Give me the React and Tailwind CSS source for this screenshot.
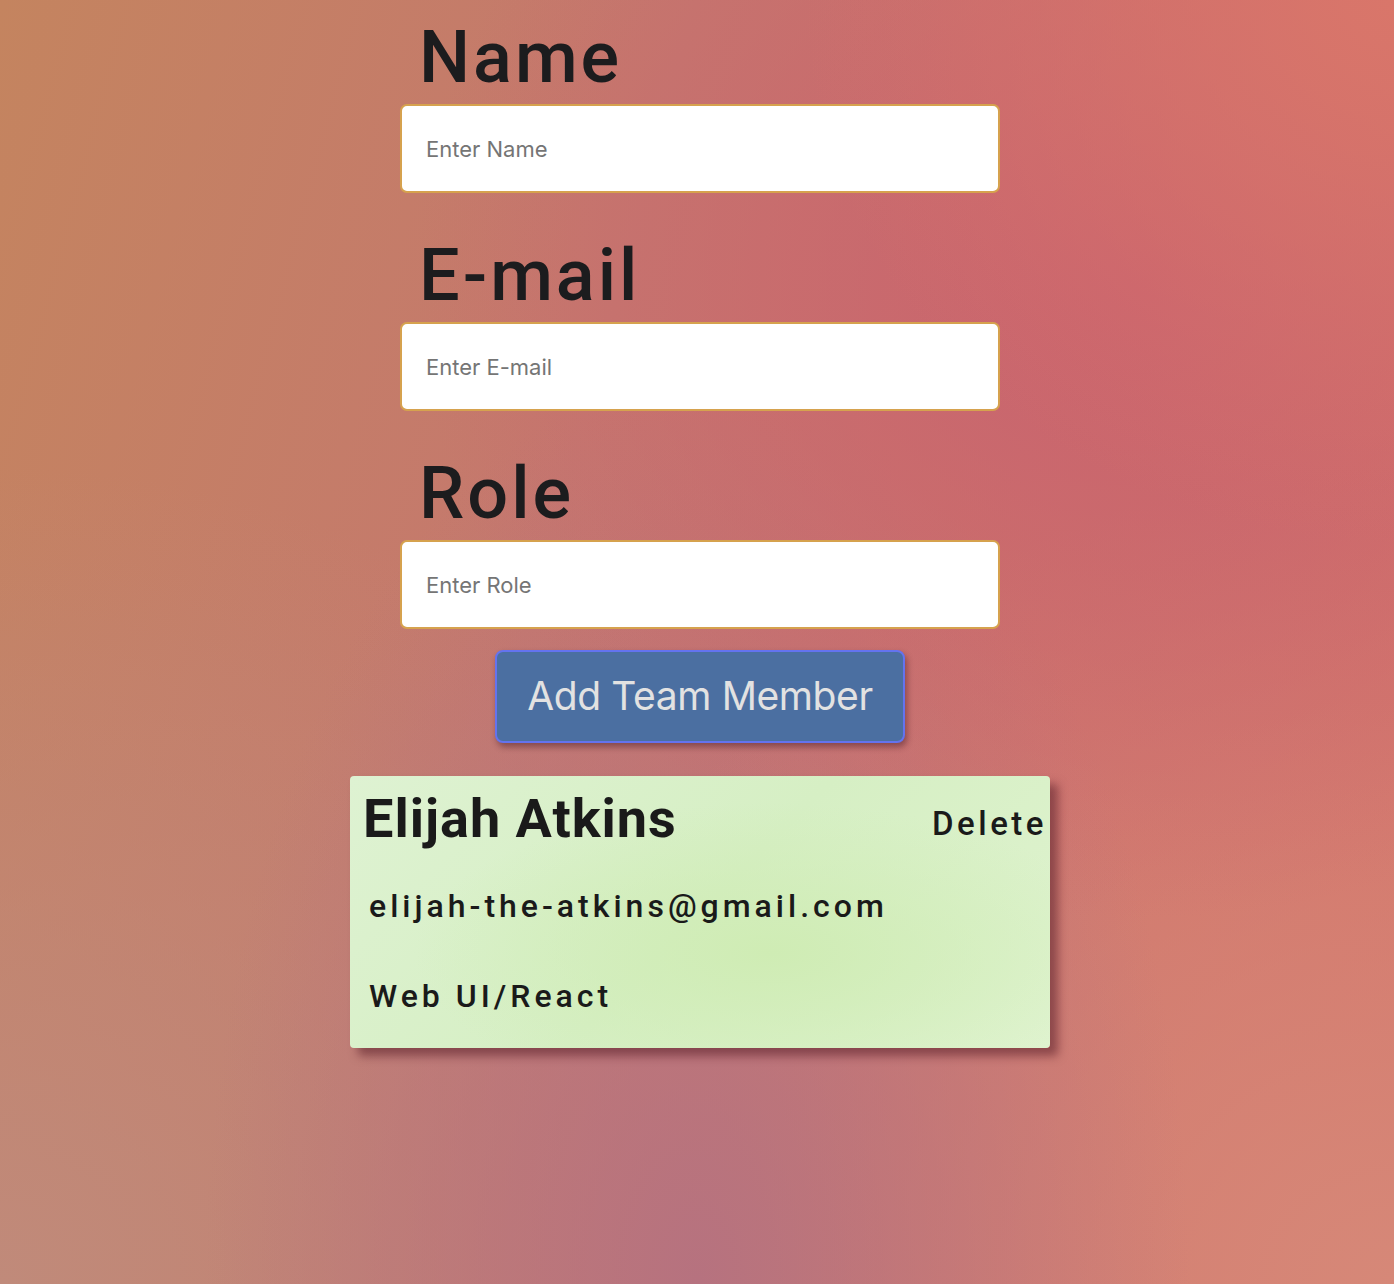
import React from 'react';

const Field = ({label, placeholder, first}) => {
    return (
        <div className="flex flex-col w-[600px]">
            <h2 className={first
                ? "font-['Roboto',sans-serif] font-medium text-[72px] leading-[72px] tracking-[3px] text-[#1c1c1e] pl-[19px] mt-[24px] mb-[10px]"
                : "font-['Roboto',sans-serif] font-medium text-[72px] leading-[72px] tracking-[3px] text-[#1c1c1e] pl-[19px] mt-[47px] mb-[10px]"}>
                {label}
            </h2>
            <input
                type="text"
                placeholder={placeholder}
                className="w-[600px] h-[89px] bg-white border-2 border-[#d6a24e] rounded-[7px] px-[24px] font-['Inter',sans-serif] text-[22px] text-[#333] placeholder:text-[#757575] outline-none"
            />
        </div>
    );
};

export default function App() {
    return (
        <div className="min-h-[1284px] w-full pl-[6px] font-['Roboto',sans-serif] bg-[radial-gradient(ellipse_at_100%_0%,#d9766a_0%,rgba(217,118,106,0)_30%),radial-gradient(ellipse_at_82%_22%,#c9626e_0%,rgba(201,98,110,0)_45%),radial-gradient(ellipse_at_50%_100%,#b6727f_0%,rgba(182,114,127,0)_50%),radial-gradient(ellipse_at_0%_100%,#c08a7a_0%,rgba(192,138,122,0)_45%),radial-gradient(ellipse_at_100%_100%,#d68878_0%,rgba(214,136,120,0)_45%),linear-gradient(105deg,#c4845f_0%,#c5786e_40%,#d57168_100%)]">
            <div className="flex flex-col items-center">
                <div className="flex flex-col -mt-[2px]">
                    <Field label="Name" placeholder="Enter Name" first />
                    <Field label="E-mail" placeholder="Enter E-mail" />
                    <Field label="Role" placeholder="Enter Role" />
                </div>

                <button className="mt-[21px] w-[410px] h-[93px] bg-[#4b6fa1] border-2 border-[#6473ee] rounded-[8px] shadow-[2px_4px_6px_rgba(60,20,30,0.45)] font-['Inter',sans-serif] text-[39px] text-[#e2e2e2] tracking-[-0.4px]">
                    Add Team Member
                </button>

                <div className="mt-[33px] w-[700px] h-[272px] rounded-[4px] shadow-[8px_8px_10px_rgba(90,30,40,0.55)] bg-[radial-gradient(ellipse_at_60%_65%,#cfecb4_0%,rgba(207,236,180,0)_60%),linear-gradient(135deg,#def2d2_0%,#d6efc4_50%,#dff3cf_100%)] flex flex-col">
                    <div className="flex items-start justify-between pl-[13px] pt-[12px]">
                        <h3 className="font-['Roboto',sans-serif] font-bold text-[54px] leading-[62px] tracking-[1px] text-[#1a1a1a]">
                            Elijah Atkins
                        </h3>
                        <button className="mt-[16px] mr-[3px] font-['Roboto',sans-serif] font-medium text-[33px] leading-[40px] tracking-[3.5px] text-[#1a1a1a]">
                            Delete
                        </button>
                    </div>
                    <p className="pl-[19px] mt-[36px] font-['Roboto',sans-serif] font-medium text-[32px] leading-[40px] tracking-[4px] text-[#1a1a1a]">
                        elijah-the-atkins@gmail.com
                    </p>
                    <p className="pl-[19px] mt-[50px] font-['Roboto',sans-serif] font-medium text-[32px] leading-[40px] tracking-[4px] text-[#1a1a1a]">
                        Web UI/React
                    </p>
                </div>
            </div>
        </div>
    );
}
